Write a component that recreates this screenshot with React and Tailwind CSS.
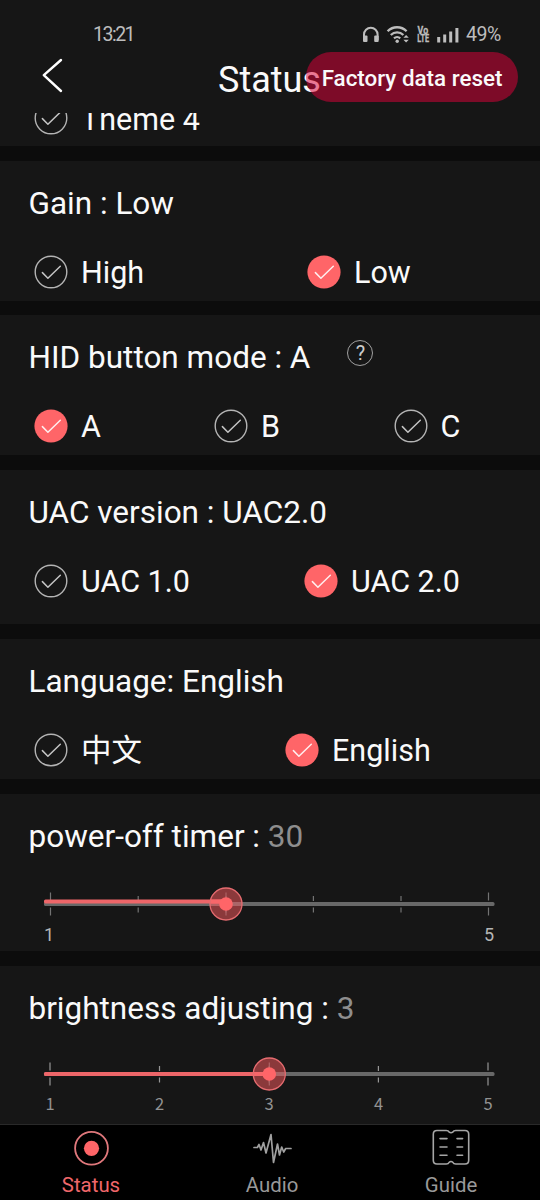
import React from "react";

function CheckCircle({ on }) {
  return (
    <svg className="h-[34px] w-[34px] shrink-0" viewBox="0 0 34 34" fill="none">
      {on ? (
        <circle cx="17" cy="17" r="16.6" fill="#ff6568" />
      ) : (
        <circle cx="17" cy="17" r="15.8" stroke="#b4b4b4" strokeWidth="1.4" />
      )}
      <path
        d="M8.4 17.6 L13.9 23.2 L26.3 11.2"
        stroke={on ? "#ffeeee" : "#c4c4c4"}
        strokeWidth="1.5"
        strokeLinecap="round"
        strokeLinejoin="round"
      />
    </svg>
  );
}

function Option({ on, label, className = "" }) {
  return (
    <div className={"flex h-9 items-center gap-[13px] " + className}>
      <CheckCircle on={on} />
      <span className="pt-[3px] text-[30.5px] leading-9 whitespace-pre">{label}</span>
    </div>
  );
}

function Section({ title, value, help, height, children }) {
  return (
    <section className={"shrink-0 bg-[#161616] pt-[25px] " + height}>
      <h2 className="flex h-9 items-center pl-[28.5px] text-[31.5px] leading-9 whitespace-pre">
        {title}
        {value && <span className="text-[#8e8e8e]">{value}</span>}
        {help && (
          <span className="-mt-[11px] ml-[37px] flex h-[26px] w-[26px] items-center justify-center rounded-full border border-[#a0a0a0] text-[20px] leading-6 text-[#cccccc]">
            ?
          </span>
        )}
      </h2>
      {children}
    </section>
  );
}

function Slider({ ticks, thumb, progressY, tickColor }) {
  return (
    <svg className="block h-9 w-full" viewBox="0 0 540 36">
      <rect x="44" y="16" width="450.5" height="4" rx="1.5" fill="#686868" />
      {ticks.map((x, i) => {
        const end = i === 0 || i === ticks.length - 1;
        return (
          <path
            key={x}
            d={end ? `M${x} 6.5v8M${x} 21.5v8` : `M${x} 10v5M${x} 21.5v5`}
            stroke={tickColor}
            strokeWidth="1.2"
          />
        );
      })}
      <rect x="44" y={progressY} width={thumb - 44} height="4" rx="1.5" fill="#ed6669" />
      <circle cx={thumb} cy="18" r="16" fill="#ff5c60" fillOpacity="0.5" stroke="#e66c70" strokeWidth="1.3" />
      <path d={`M${thumb + 5} 18H${thumb + 15}`} stroke="#a96668" strokeWidth="3.6" />
      <path d={`M${thumb - 15} ${progressY + 2}H${thumb}`} stroke="#f7676a" strokeWidth="4" />
      <path d={`M${thumb} 6.5v23`} stroke="#ad6265" strokeWidth="1.2" />
      <circle cx={thumb} cy="18" r="6.8" fill="#ff6568" />
    </svg>
  );
}

function StatusBar() {
  return (
    <div className="flex h-[52px] items-center pt-[17px] pl-[93px] text-[19.5px] leading-6 text-[#bdbdbd]">
      <span className="w-[269px] pt-px text-[19.5px] tracking-[-1.5px]">13:21</span>
      <svg className="h-6 w-[100px]" viewBox="0 0 100 24" fill="none">
        <path d="M2 17V11.5a6.8 6.8 0 0 1 13.6 0V17" stroke="#bdbdbd" strokeWidth="2" />
        <rect x="1" y="12.5" width="4.5" height="6.5" rx="1" fill="#bdbdbd" />
        <rect x="12.2" y="12.5" width="4.5" height="6.5" rx="1" fill="#bdbdbd" />
        <g stroke="#bdbdbd" strokeWidth="2.3">
          <path d="M25.6 8.3a13.2 13.2 0 0 1 19 0" />
          <path d="M28.8 12a9 9 0 0 1 12.6 0" />
          <path d="M32 15.3a4.6 4.6 0 0 1 6.2 0" />
        </g>
        <circle cx="35.2" cy="18.3" r="1.7" fill="#bdbdbd" />
        <path d="M41.4 14.8l2.7-2.8 2.7 2.8zM41.4 16.7l2.7 2.8 2.7-2.8z" fill="#bdbdbd" />
        <g fill="#bdbdbd" stroke="#bdbdbd" strokeWidth="0.3" fontSize="10" fontWeight="700">
          <text x="55.6" y="10.8" textLength="10.5" lengthAdjust="spacingAndGlyphs">Vo</text>
          <text x="55.3" y="19.4" textLength="11.8" lengthAdjust="spacingAndGlyphs">LTE</text>
        </g>
        <path d="M75.2 14h3v5.4h-3zM81.2 11.4h3v8h-3zM87.2 8.5h3v10.9h-3zM93.4 5h3v14.4h-3z" fill="#bdbdbd" />
      </svg>
      <span className="ml-1 pt-px tracking-[-0.5px]">49%</span>
    </div>
  );
}

function Header() {
  return (
    <header className="relative h-[113px] shrink-0 bg-[#161616]">
      <StatusBar />
      <div className="flex h-[52px] items-center">
        <svg className="ml-10 h-10 w-6" viewBox="0 0 24 40" fill="none">
          <path d="M21 2L3.8 17.2L21 33" stroke="#fff" strokeWidth="2.4" strokeLinecap="round" strokeLinejoin="round" />
        </svg>
        <h1 className="ml-[154px] pt-[3px] text-[36px] leading-[44px]">Status</h1>
      </div>
      <button className="absolute top-[52px] left-[306px] flex h-[50px] w-[212px] items-center justify-center rounded-full bg-[#dc0038]/52 pt-px text-[22.4px] leading-7 font-medium whitespace-pre">
        Factory data reset
      </button>
    </header>
  );
}

const navItems = [
  {
    label: "Status",
    icon: (
      <>
        <circle cx="20.5" cy="20.3" r="16.4" stroke="#e0787c" strokeWidth="1.8" />
        <circle cx="20.5" cy="20.3" r="7.6" fill="#ff6568" />
      </>
    ),
  },
  {
    label: "Audio",
    icon: (
      <path
        d="M2 19.5h3.4L7 16.5l2 5.5L11.5 14.5l2.5 10.5L19 6.5l2.5 28L25.5 16l2 11 2.2-8 2 5 2-3.5H39"
        stroke="#a0a0a0"
        strokeWidth="1.7"
        strokeLinecap="round"
        strokeLinejoin="round"
      />
    ),
  },
  {
    label: "Guide",
    icon: (
      <g stroke="#a5a5a5" strokeWidth="1.6" strokeLinecap="round">
        <path d="M6 2.5H15.2Q17.5 2.5 18 3.9Q20 5.5 22 3.9Q22.5 2.5 24.8 2.5H34Q37.7 2.5 37.7 6.2V32.3Q37.7 36 34 36H24.8Q22.5 36 22 34.6Q20 32.3 18 34.6Q17.5 36 15.2 36H6Q2.3 36 2.3 32.3V6.2Q2.3 2.5 6 2.5Z" />
        <path d="M9 10.6h7M9 19h7M9 27.3h7M26 10.6h5.6M26 19h5.6M26 27.3h5.6" />
      </g>
    ),
  },
];

export default function App() {
  return (
    <div className="flex h-[1200px] w-[540px] flex-col overflow-hidden bg-[#0c0c0c] font-['Roboto','Noto_Sans_CJK_SC',sans-serif] text-[#fafafa]">
      <Header />
      <div className="mb-[15px] h-[33px] shrink-0 overflow-hidden bg-[#161616]">
        <Option label="Theme 4" className="-mt-[13px] ml-[34px]" />
      </div>

      <Section title="Gain : Low" height="mb-[14px] h-[140px]">
        <div className="mt-[31.5px] flex pl-[34px]">
          <Option label="High" className="w-[273px]" />
          <Option on label="Low" />
        </div>
      </Section>

      <Section title="HID button mode : A" help height="mb-[15px] h-[140px]">
        <div className="mt-[31.5px] flex pl-[34px]">
          <Option on label="A" className="w-[180px]" />
          <Option label="B" className="w-[179.5px]" />
          <Option label="C" />
        </div>
      </Section>

      <Section title="UAC version : UAC2.0" height="mb-[15px] h-[154px]">
        <div className="mt-[31.5px] flex pl-[34px]">
          <Option label="UAC 1.0" className="w-[270px]" />
          <Option on label="UAC 2.0" />
        </div>
      </Section>

      <Section title="Language: English" height="mb-[15px] h-[140px]">
        <div className="mt-[31.5px] flex pl-[34px]">
          <Option label="中文" className="w-[251px]" />
          <Option on label="English" />
        </div>
      </Section>

      <Section title="power-off timer : " value="30" height="mb-[15px] h-[157px]">
        <div className="mt-[31px]">
          <Slider ticks={[50.5, 138.2, 226, 313.4, 401, 488.5]} thumb={226} progressY={13.5} tickColor="#737373" />
          <div className="mt-px flex justify-between pr-[41px] pl-[39px] text-[18px] leading-6 text-[#b5b5b5]">
            <span className="w-5 text-center">1</span>
            <span className="w-5 text-center">5</span>
          </div>
        </div>
      </Section>

      <Section title="brightness adjusting : " value="3" height="h-[158px]">
        <div className="mt-[28.6px]">
          <Slider ticks={[50, 159.5, 269.3, 378.4, 488]} thumb={269.3} progressY={16} tickColor="#969696" />
          <div className="-mt-[0.6px] flex justify-between pr-[42px] pl-10 font-['Noto_Sans_CJK_SC',sans-serif] text-[16.5px] leading-6 text-[#929292]">
            {[1, 2, 3, 4, 5].map((n) => (
              <span key={n} className="w-5 text-center">{n}</span>
            ))}
          </div>
        </div>
      </Section>

      <nav className="flex h-[76px] shrink-0 justify-between border-t border-[#292929] bg-black pt-[3px] pr-[44px] pl-[46px]">
        {navItems.map((item, i) => (
          <a
            key={item.label}
            className={
              "flex w-[90px] flex-col items-center text-[20.4px] leading-6 " +
              (i === 0 ? "text-[#f0676a]" : "text-[#999999]") +
              (i === 1 ? " pl-[2px]" : "")
            }
          >
            <svg className="h-10 w-10" viewBox="0 0 40 40" fill="none">
              {item.icon}
            </svg>
            <span className="mt-[5px]">{item.label}</span>
          </a>
        ))}
      </nav>
    </div>
  );
}
